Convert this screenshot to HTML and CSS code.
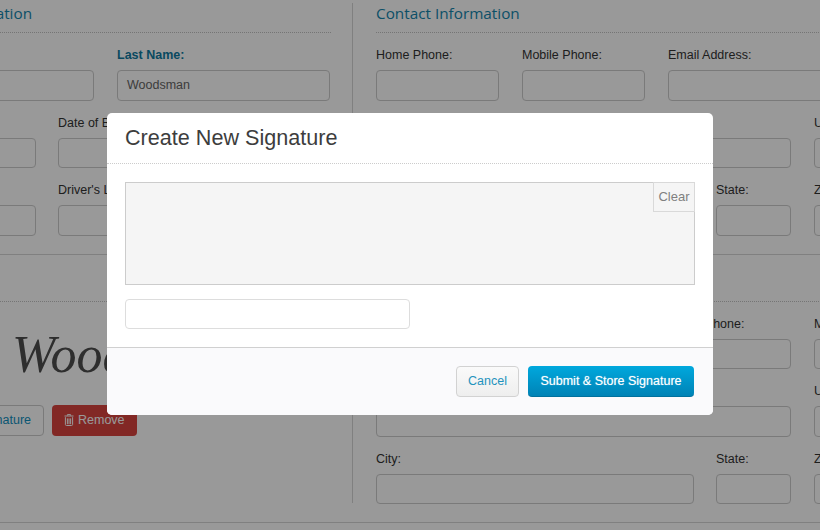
FILE: index.html
```html
<!DOCTYPE html>
<html lang="en">
<head>
<meta charset="utf-8">
<title>Create New Signature</title>
<link rel="stylesheet" href="styles.css">
</head>
<body>
<div class="sheet">
  <div class="form">
    <section class="col col-left">
      <h2 class="heading">Personal Information</h2>
      <div class="rows">
        <div class="row">
          <label class="field w-first"><span class="lbl">First Name:</span><span class="input"></span></label>
          <label class="field w-last"><span class="lbl lbl-strong">Last Name:</span><span class="input">Woodsman</span></label>
        </div>
        <div class="row">
          <label class="field w-third"><span class="lbl">Social Security:</span><span class="input"></span></label>
          <label class="field w-third"><span class="lbl">Date of Birth:</span><span class="input"></span></label>
        </div>
        <div class="row">
          <label class="field w-third"><span class="lbl">Gender:</span><span class="input"></span></label>
          <label class="field w-third"><span class="lbl">Driver's License:</span><span class="input"></span></label>
        </div>
      </div>
      <div class="divider"></div>
      <div class="subhead"></div>
      <div class="signature">Woodsman</div>
      <div class="actions">
        <span class="btn btn-outline">Create New Signature</span>
        <span class="btn btn-danger">
          <svg class="trash" viewBox="0 0 10 12" aria-hidden="true"><path d="M3.4 1.6V.6h3.2v1M.5 2h9M1.4 3.2v7.3c0 .6.4 1 1 1h5.2c.6 0 1-.4 1-1V3.2M3.4 4.4v5.8M5 4.4v5.8M6.6 4.4v5.8"/></svg>
          Remove
        </span>
      </div>
    </section>
    <section class="col col-right">
      <h2 class="heading">Contact Information</h2>
      <div class="rows">
        <div class="row">
          <label class="field w-123"><span class="lbl">Home Phone:</span><span class="input"></span></label>
          <label class="field w-123"><span class="lbl">Mobile Phone:</span><span class="input"></span></label>
          <label class="field w-270"><span class="lbl">Email Address:</span><span class="input"></span></label>
        </div>
        <div class="row">
          <label class="field w-415"><span class="lbl">Address:</span><span class="input"></span></label>
          <label class="field w-rest"><span class="lbl">Unit:</span><span class="input"></span></label>
        </div>
        <div class="row">
          <label class="field w-318"><span class="lbl">City:</span><span class="input"></span></label>
          <label class="field w-75"><span class="lbl">State:</span><span class="input"></span></label>
          <label class="field w-rest"><span class="lbl">Zip:</span><span class="input"></span></label>
        </div>
      </div>
      <div class="divider"></div>
      <div class="subhead"></div>
      <div class="rows rows-second">
        <div class="row">
          <label class="field w-269"><span class="lbl">Name:</span><span class="input"></span></label>
          <label class="field w-123"><span class="lbl">Home Phone:</span><span class="input"></span></label>
          <label class="field w-rest"><span class="lbl">Mobile Phone:</span><span class="input"></span></label>
        </div>
        <div class="row">
          <label class="field w-415"><span class="lbl">Address:</span><span class="input"></span></label>
          <label class="field w-rest"><span class="lbl">Unit:</span><span class="input"></span></label>
        </div>
        <div class="row">
          <label class="field w-318"><span class="lbl">City:</span><span class="input"></span></label>
          <label class="field w-75"><span class="lbl">State:</span><span class="input"></span></label>
          <label class="field w-rest"><span class="lbl">Zip:</span><span class="input"></span></label>
        </div>
      </div>
    </section>
  </div>
  <div class="rule"></div>

  <div class="overlay"></div>

  <div class="modal">
    <header class="modal-head"><h1 class="modal-title">Create New Signature</h1></header>
    <div class="modal-body">
      <div class="pad"><span class="clear">Clear</span></div>
      <span class="name-input"></span>
    </div>
    <footer class="modal-foot">
      <span class="mbtn mbtn-cancel">Cancel</span>
      <span class="mbtn mbtn-submit">Submit &amp; Store Signature</span>
    </footer>
  </div>
</div>
</body>
</html>
```

FILE: styles.css
```css
* { box-sizing: border-box; }
html, body { margin: 0; padding: 0; }
body { font-family: "Liberation Sans", Arial, sans-serif; font-size: 12.5px; color: #333; }

.sheet { position: relative; width: 820px; height: 530px; overflow: hidden; background: #fff; }

.form { display: flex; margin-left: -119px; padding-top: 3px; width: 1200px; }
.col { height: 500px; }
.col-left { width: 472px; padding-right: 21px; border-right: 1px solid #d6d6d6; }
.col-right { width: 728px; padding-left: 23px; }

.heading {
  margin: 0; height: 30px;
  font: 400 15.3px/20px "Open Sans", sans-serif;
  color: #1486ad;
  border-bottom: 1px dotted #c4c4c4;
}
.rows { display: flex; flex-direction: column; gap: 13px; margin-top: 13px; }
.row { display: flex; gap: 23px; }
.field { display: block; flex: none; }
.lbl { display: block; height: 24px; line-height: 18px; white-space: nowrap; }
.lbl-strong { font-weight: 700; color: #0f7ba1; }
.input {
  display: block; height: 30.5px; padding: 0 9px; line-height: 29px;
  border: 1px solid #ccc; border-radius: 4px; color: #666;
}
.w-first { width: 213px; }
.w-last { width: 213px; }
.w-third { width: 155px; }
.w-third + .w-third { margin-left: -1px; }
.w-123 { width: 123px; }
.w-269 { width: 269px; }
.w-270 { width: 270px; }
.w-415 { width: 415px; }
.w-318 { width: 318px; }
.w-75 { width: 75px; margin-left: -1px; }
.w-rest { width: 200px; }

.divider { margin-top: 18px; border-top: 1px solid #d6d6d6; }
.subhead { height: 47px; border-bottom: 1px dotted #c4c4c4; }

.signature {
  margin: 18px 0 0 131px; height: 68px;
  font: italic 400 52px/70px "Liberation Serif", serif;
  color: #4d4d4d; white-space: nowrap;
}
.actions { display: flex; gap: 8px; margin-top: 17px; }
.btn {
  display: flex; align-items: center; justify-content: flex-end; gap: 4px;
  height: 31px; padding: 0 12px; border-radius: 4px; white-space: nowrap;
}
.btn-outline { width: 163px; border: 1px solid #ccc; color: #0f8fc0; }
.btn-danger { background: #d9443f; color: #fff; }
.trash { width: 10px; height: 12px; fill: none; stroke: #fff; stroke-width: 1; }

.rule { margin-top: 19px; border-top: 1px solid #d6d6d6; }

.overlay { position: absolute; inset: 0; background: rgba(0, 0, 0, .4); }

.modal {
  position: absolute; left: 107px; top: 113px; width: 606px; height: 302px;
  display: flex; flex-direction: column;
  background: #fff; border-radius: 5px; overflow: hidden;
}
.modal-head { height: 51px; padding: 11px 18px 0; border-bottom: 1px dotted #ccc; }
.modal-title { margin: 0; font-weight: 400; font-size: 21.6px; line-height: 27px; color: #3d3d3d; }
.modal-body { height: 183px; padding: 18px 18px 0; }
.pad { position: relative; height: 103px; width: 570px; background: #f5f5f5; border: 1px solid #ccc; }
.clear {
  position: absolute; top: -1px; right: -1px; width: 42px; height: 30px;
  text-align: center; line-height: 28px; color: #808080; font-size: 13px;
  border: 1px solid #d9d9d9; background: #f5f5f5;
}
.name-input {
  display: block; width: 285px; height: 30px; margin-top: 14px;
  border: 1px solid #ddd; border-radius: 4px; background: #fff;
}
.modal-foot {
  flex: 1; display: flex; justify-content: flex-end; gap: 9px;
  padding: 18px 19px 0 0; background: #fafafc; border-top: 1px solid #d0d0d0;
}
.mbtn { height: 31px; line-height: 29px; border-radius: 4px; text-align: center; white-space: nowrap; }
.mbtn-cancel {
  width: 63px; color: #1f93bd; border: 1px solid #d2d2d2;
  background: linear-gradient(#fafafa, #eeeeee);
}
.mbtn-submit {
  width: 166px; color: #fff; line-height: 30px;
  background: linear-gradient(#00a8dd, #0083b6);
  border-bottom: 1px solid #00719d;
  text-shadow: 0 0 1px rgba(255,255,255,.6);
}
```
